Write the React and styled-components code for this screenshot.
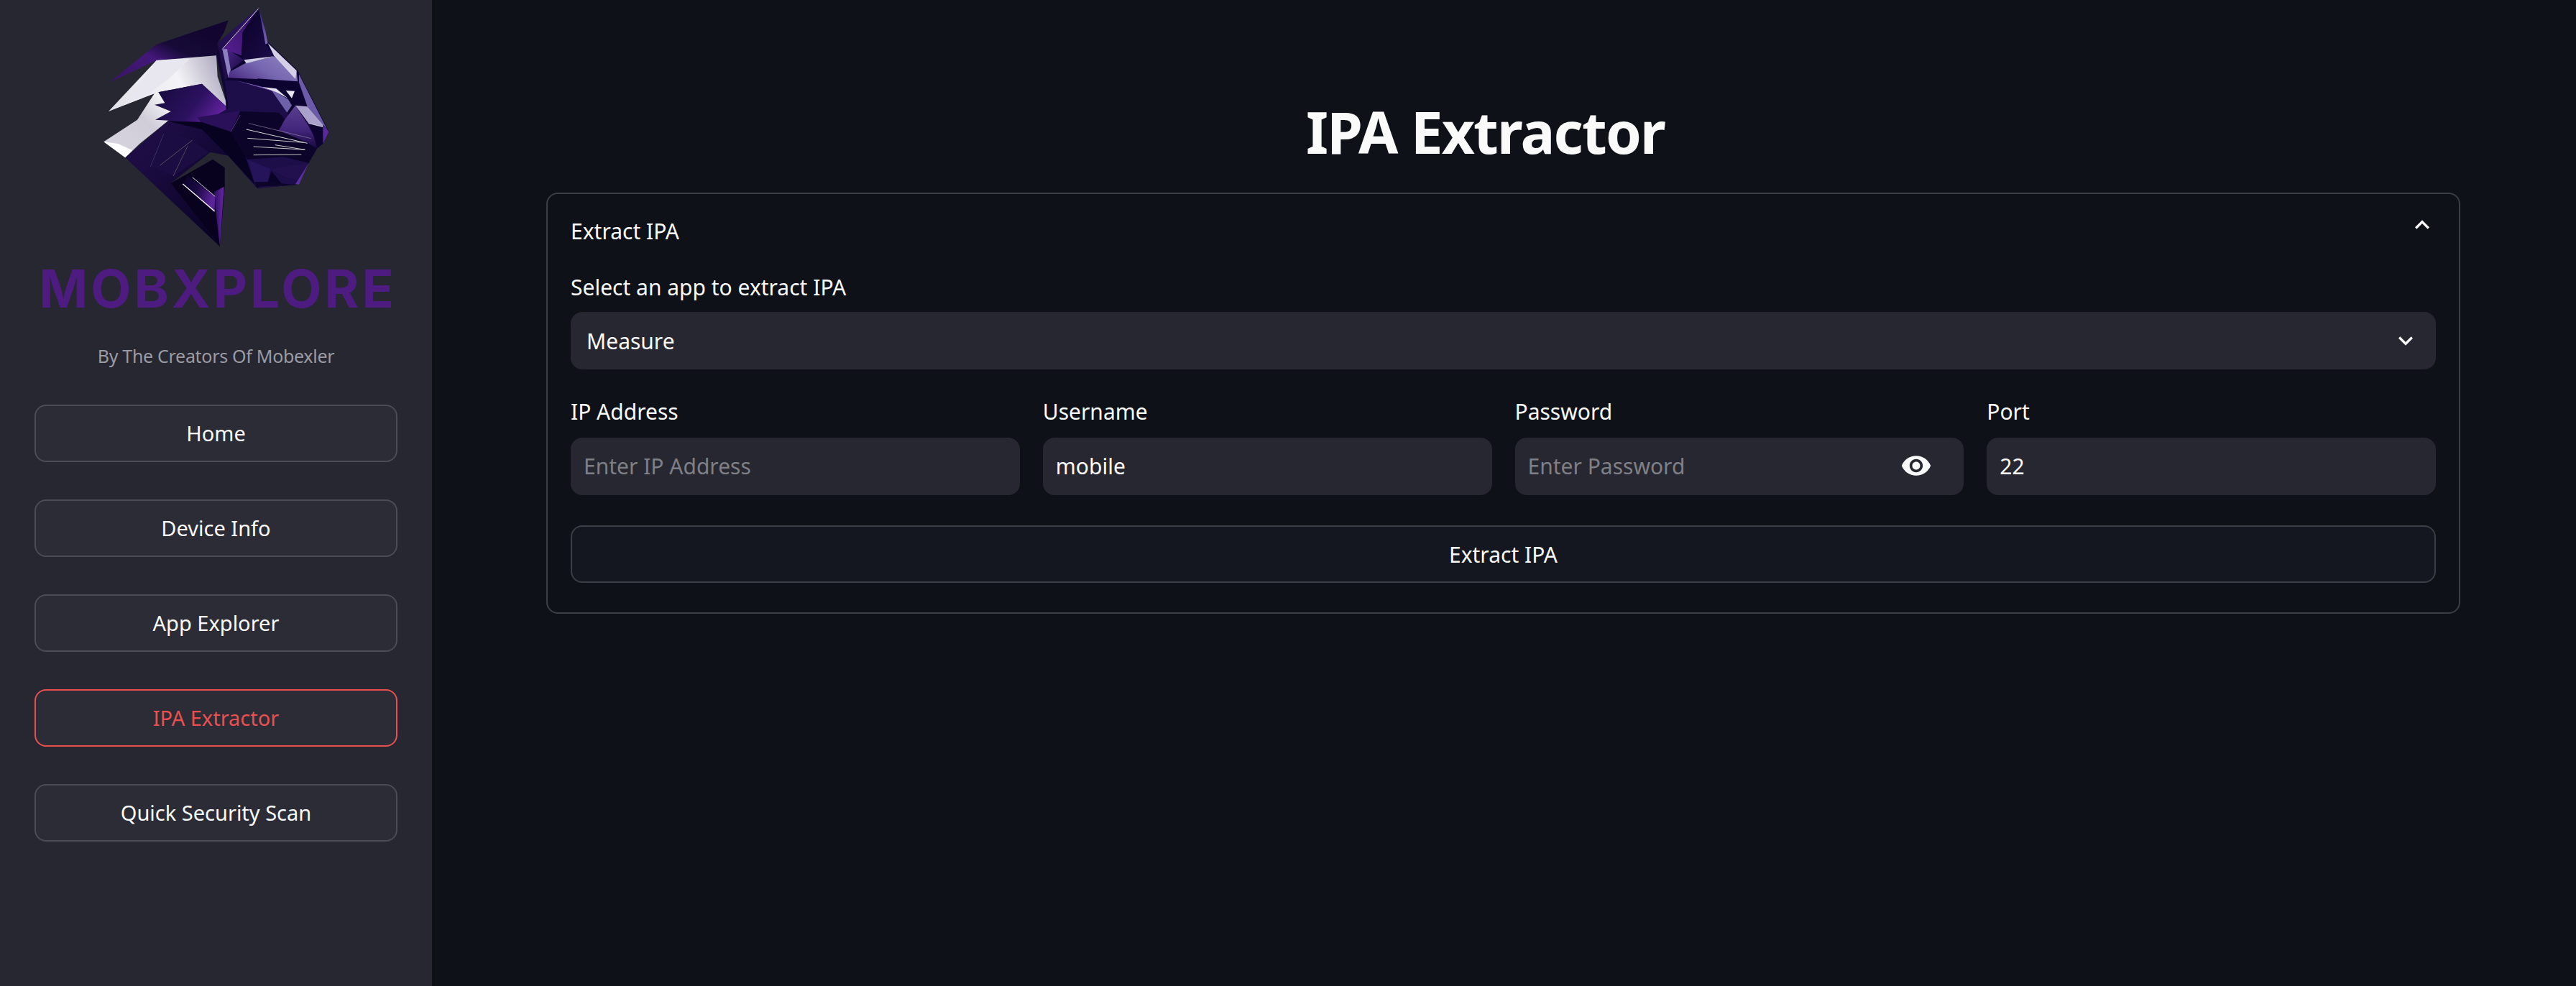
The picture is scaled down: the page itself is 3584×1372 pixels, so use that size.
import React from "react";
import styled, { createGlobalStyle } from "styled-components";
import { MdExpandLess, MdExpandMore, MdVisibility } from "react-icons/md";

const navItems = ["Home", "Device Info", "App Explorer", "IPA Extractor", "Quick Security Scan"];

const fields = [
  { label: "IP Address", placeholder: "Enter IP Address" },
  { label: "Username", value: "mobile" },
  { label: "Password", placeholder: "Enter Password", eye: true },
  { label: "Port", value: "22" },
];

// cat logo facets, drawn in a 1080 box
const facets = [
  ["url(#maneTop)", "92,345 290,185 590,85 572,135 545,180 540,232 290,252"],
  ["url(#maneWhite)", "90,465 290,252 540,232 545,320 590,452 480,350 298,385 230,410"],
  ["#e8e6ee", "290,252 430,245 340,330 230,410 150,440"],
  ["url(#manePurple)", "298,385 480,350 590,452 480,515 340,503 285,500 350,465 282,437 325,430"],
  ["url(#maneLow)", "70,592 210,500 285,385 298,385 325,430 282,437 350,465 285,500 340,503 220,600 160,658"],
  ["#ffffff", "70,592 130,600 190,628 160,658"],
  ["url(#neck)", "160,658 340,503 480,515 590,650 515,635 350,765 555,1030"],
  ["#1b0c42", "320,545 440,585 510,635 360,735 265,695"],
  ["#08021f", "350,765 525,665 575,700 575,780 555,1030"],
  ["url(#chestBand)", "420,735 535,820 532,885 400,770"],
  ["url(#chestTip)", "532,800 572,780 555,1030 540,900"],

  // head
  ["#0d0330", "545,180 717,33 750,170 880,295 1010,550 985,600 960,620 925,680 870,772 710,785 590,650 575,340"],
  ["#120636", "540,232 545,180 565,205 590,325 575,340 588,452"],
  ["#1d0d48", "575,335 620,335 730,362 765,370 835,470 960,620 925,680 870,770 720,785 690,765 590,650 480,515 590,452"],
  ["#2a1058", "460,490 640,462 600,550 480,515"],
  ["#070220", "335,505 480,510 600,550 660,650 700,770 590,650 480,540"],
  ["#0c0429", "600,550 640,465 800,470 925,600 960,620 925,680 820,655 670,665 660,650"],

  // jaw
  ["#26145a", "670,665 765,705 755,760 700,760"],
  ["#22104e", "765,705 925,682 880,750 830,740"],
  ["#0a0328", "755,760 770,715 815,770"],
  ["#0c0429", "700,760 755,760 870,772 710,780"],
  ["#5a2ea0", "925,682 885,770 870,768"],

  // nose
  ["url(#nose)", "870,440 925,525 945,565 960,615 910,590 800,545 825,500"],
  ["#0d0330", "935,520 1010,550 985,600 960,580"],
  ["#5a2a9a", "985,525 1010,550 985,600"],

  // ear and forehead
  ["url(#earBack)", "545,180 717,33 565,205 590,320 575,335"],
  ["url(#earInner)", "568,205 712,42 650,135 645,232"],
  ["url(#earDark)", "650,135 717,33 745,185 780,232 655,250 645,230"],
  ["url(#earEdge)", "717,33 745,130 755,180 745,185"],
  ["url(#earSmall)", "585,205 655,250 600,292"],
  ["#8d80c0", "565,205 585,205 600,292 590,325"],
  ["url(#brow)", "595,300 660,265 780,235 875,300 880,345 710,330 590,325"],
  ["#d5d0e6", "755,180 875,295 870,330 780,232"],
  ["#cfcbe0", "655,250 780,235 665,265"],
  ["#0c0330", "710,328 880,340 885,365 920,445 870,440 830,380 735,360"],
  ["#6f60aa", "765,370 840,415 855,440 835,470"],
  ["#6b5aa8", "885,310 1005,545 985,520 920,445 885,345"],
  ["#a9a0cc", "870,440 920,445 985,520 985,530 925,515"],
  ["#e8e4f0", "830,378 867,380 855,410"],
  ["#e4e0f0", "725,362 790,370 838,410 790,385"],
  ["#7a5cb4", "620,335 730,362 790,385"],
];

const lines = [
  ["#e6e6e6", 3, 565, 205, 717, 35],
  ["#e6e4ee", 2, 925, 515, 985, 530],
  ["#d8d8d8", 3, 665, 540, 920, 598],
  ["#c8c8c8", 3, 670, 577, 905, 595],
  ["#8f86a8", 2, 675, 515, 935, 578],
  ["#c8c8c8", 3, 695, 612, 910, 625],
  ["#d0d0d0", 3, 785, 605, 910, 625],
  ["#c0c0c0", 3, 695, 647, 895, 645],
  ["#77766f", 2, 305, 690, 440, 585],
  ["#4c3f72", 2, 265, 695, 320, 560],
  ["#6b6a66", 2, 360, 735, 420, 610],
  ["#6d4ea3", 2, 600, 550, 640, 480],
  ["#d8d4e0", 3, 440, 740, 535, 820],
  ["#ffffff", 4, 400, 768, 533, 882],
];

const CatLogo = () => (
  <LogoSvg viewBox="0 0 1080 1080" aria-hidden="true">
    <defs>
      <linearGradient id="maneTop" x1="0.1" y1="0.9" x2="0.8" y2="0.2">
        <stop offset="0" stopColor="#3a1568" />
        <stop offset="0.4" stopColor="#44187a" />
        <stop offset="0.65" stopColor="#170a38" />
        <stop offset="1" stopColor="#120630" />
      </linearGradient>
      <linearGradient id="maneWhite" x1="0" y1="0.6" x2="1" y2="0.4">
        <stop offset="0" stopColor="#e4e2ea" />
        <stop offset="0.6" stopColor="#f4f3f7" />
        <stop offset="1" stopColor="#aca7bd" />
      </linearGradient>
      <linearGradient id="manePurple" x1="0" y1="0.3" x2="1" y2="0.7">
        <stop offset="0" stopColor="#170b40" />
        <stop offset="0.55" stopColor="#2c1160" />
        <stop offset="1" stopColor="#6a24a8" />
      </linearGradient>
      <linearGradient id="maneLow" x1="0" y1="1" x2="1" y2="0">
        <stop offset="0" stopColor="#d8d5e0" />
        <stop offset="0.6" stopColor="#d0cdd8" />
        <stop offset="1" stopColor="#ffffff" />
      </linearGradient>
      <linearGradient id="neck" x1="0.2" y1="0.2" x2="0.8" y2="0.9">
        <stop offset="0" stopColor="#1e0d45" />
        <stop offset="1" stopColor="#0a0326" />
      </linearGradient>
      <linearGradient id="chestBand" x1="0" y1="0" x2="1" y2="0.4">
        <stop offset="0" stopColor="#0b0329" />
        <stop offset="0.5" stopColor="#1a0a42" />
        <stop offset="1" stopColor="#5a2398" />
      </linearGradient>
      <linearGradient id="chestTip" x1="0" y1="0.5" x2="1" y2="0.4">
        <stop offset="0" stopColor="#2c1160" />
        <stop offset="1" stopColor="#6a24a8" />
      </linearGradient>
      <linearGradient id="nose" x1="0.5" y1="0" x2="0.5" y2="1">
        <stop offset="0" stopColor="#5a3f90" />
        <stop offset="0.6" stopColor="#41257a" />
        <stop offset="1" stopColor="#1a0a40" />
      </linearGradient>
      <linearGradient id="brow" x1="0" y1="0.8" x2="1" y2="0.2">
        <stop offset="0" stopColor="#4a2a80" />
        <stop offset="0.5" stopColor="#7566b0" />
        <stop offset="1" stopColor="#8d80c0" />
      </linearGradient>
      <linearGradient id="earBack" x1="0" y1="1" x2="1" y2="0">
        <stop offset="0" stopColor="#1a0c42" />
        <stop offset="1" stopColor="#35176e" />
      </linearGradient>
      <linearGradient id="earInner" x1="0" y1="1" x2="1" y2="0">
        <stop offset="0" stopColor="#5a1f96" />
        <stop offset="1" stopColor="#2a1058" />
      </linearGradient>
      <linearGradient id="earDark" x1="0" y1="0" x2="1" y2="1">
        <stop offset="0" stopColor="#0a0226" />
        <stop offset="1" stopColor="#1d0b4a" />
      </linearGradient>
      <linearGradient id="earEdge" x1="0.5" y1="0" x2="0.5" y2="1">
        <stop offset="0" stopColor="#3a1f7a" />
        <stop offset="1" stopColor="#7a68bc" />
      </linearGradient>
      <linearGradient id="earSmall" x1="0" y1="0" x2="1" y2="1">
        <stop offset="0" stopColor="#4a2585" />
        <stop offset="1" stopColor="#1a0a45" />
      </linearGradient>
    </defs>
    {facets.map(([fill, points]) => (
      <polygon key={points} fill={fill} points={points} />
    ))}
    {lines.map(([stroke, width, x1, y1, x2, y2]) => (
      <line key={`${x1}-${y1}`} stroke={stroke} strokeWidth={width} x1={x1} y1={y1} x2={x2} y2={y2} />
    ))}
  </LogoSvg>
);

const App = () => {
  return (
    <>
      <GlobalStyle />
      <Page>
        <Sidebar>
          <CatLogo />
          <Brand>MOBXPLORE</Brand>
          <Tagline>By The Creators Of Mobexler</Tagline>
          <Nav>
            {navItems.map((item) => (
              <NavButton key={item} $active={item === "IPA Extractor"}>
                {item}
              </NavButton>
            ))}
          </Nav>
        </Sidebar>
        <Main>
          <Title>IPA Extractor</Title>
          <Expander>
            <ExpanderHeader>
              <span>Extract IPA</span>
              <MdExpandLess />
            </ExpanderHeader>
            <Label>Select an app to extract IPA</Label>
            <SelectBox>
              <span>Measure</span>
              <MdExpandMore />
            </SelectBox>
            <FieldRow>
              {fields.map((field) => (
                <div key={field.label}>
                  <Label>{field.label}</Label>
                  <InputBox>
                    {field.value ? (
                      <span>{field.value}</span>
                    ) : (
                      <Placeholder>{field.placeholder}</Placeholder>
                    )}
                    {field.eye && <MdVisibility />}
                  </InputBox>
                </div>
              ))}
            </FieldRow>
            <ExtractButton>Extract IPA</ExtractButton>
          </Expander>
        </Main>
      </Page>
    </>
  );
};

const GlobalStyle = createGlobalStyle`
  html, body {
    margin: 0;
    background: #0e1117;
  }

  * {
    box-sizing: border-box;
  }
`;

const Page = styled.div`
  display: flex;
  min-height: 1372px;
  color: #fafafa;
  font-family: "Noto Sans", "Open Sans", sans-serif;
  font-size: 30px;
`;

const Sidebar = styled.aside`
  display: flex;
  flex-direction: column;
  align-items: center;
  flex: 0 0 601px;
  padding: 0 48px;
  background: #262730;
  font-size: 29px;
`;

const LogoSvg = styled.svg`
  display: block;
  flex: none;
  width: 360px;
  height: 360px;
`;

const Brand = styled.div`
  margin-right: -5px;
  color: #4e1b80;
  font-family: Inter, "Noto Sans", sans-serif;
  font-size: 73px;
  font-weight: 700;
  letter-spacing: 4px;
  line-height: 84px;
  white-space: nowrap;
`;

const Tagline = styled.div`
  margin-top: 31px;
  color: #9a9ba3;
  font-size: 25px;
  letter-spacing: -0.3px;
  line-height: 40px;
`;

const Nav = styled.nav`
  display: flex;
  flex-direction: column;
  gap: 52px;
  width: 100%;
  margin-top: 48px;
`;

const NavButton = styled.button`
  height: 80px;
  padding: 0 0 2px;
  border: 2px solid ${(props) => (props.$active ? "#ea5050" : "#4b4c56")};
  border-radius: 16px;
  background: #2b2c36;
  color: ${(props) => (props.$active ? "#ea5050" : "#fafafa")};
  font: inherit;
`;

const Main = styled.main`
  flex: 1;
  padding: 120px 161px 0 159px;
`;

const Title = styled.h1`
  margin: 0 0 22px;
  padding-right: 50px;
  font-size: 80px;
  font-weight: 700;
  letter-spacing: -1.8px;
  line-height: 126px;
  text-align: center;
`;

const Expander = styled.section`
  height: 586px;
  padding: 0 32px;
  border: 2px solid #3c3e46;
  border-radius: 16px;
`;

const ExpanderHeader = styled.div`
  display: flex;
  align-items: center;
  justify-content: space-between;
  height: 102px;

  svg {
    width: 40px;
    height: 40px;
    margin: -16px -1px 0 0;
  }
`;

const Label = styled.div`
  height: 40px;
  margin: 8px 0 16px;
  line-height: 40px;
`;

const SelectBox = styled.div`
  display: flex;
  align-items: center;
  justify-content: space-between;
  height: 80px;
  margin-top: -2px;
  padding: 0 22px;
  border-radius: 16px;
  background: #262730;

  svg {
    width: 40px;
    height: 40px;
  }
`;

const FieldRow = styled.div`
  display: grid;
  grid-template-columns: repeat(4, 1fr);
  gap: 32px;
  margin-top: 31px;
`;

const InputBox = styled.div`
  display: flex;
  align-items: center;
  justify-content: space-between;
  height: 80px;
  padding: 0 44px 2px 18px;
  border-radius: 16px;
  background: #262730;

  svg {
    width: 44px;
    height: 44px;
  }
`;

const Placeholder = styled.span`
  color: #7f8087;
`;

const ExtractButton = styled.button`
  display: block;
  width: 100%;
  height: 80px;
  margin-top: 42px;
  border: 2px solid #3c3e46;
  border-radius: 16px;
  background: #141720;
  color: #fafafa;
  font: inherit;
`;

export default App;
